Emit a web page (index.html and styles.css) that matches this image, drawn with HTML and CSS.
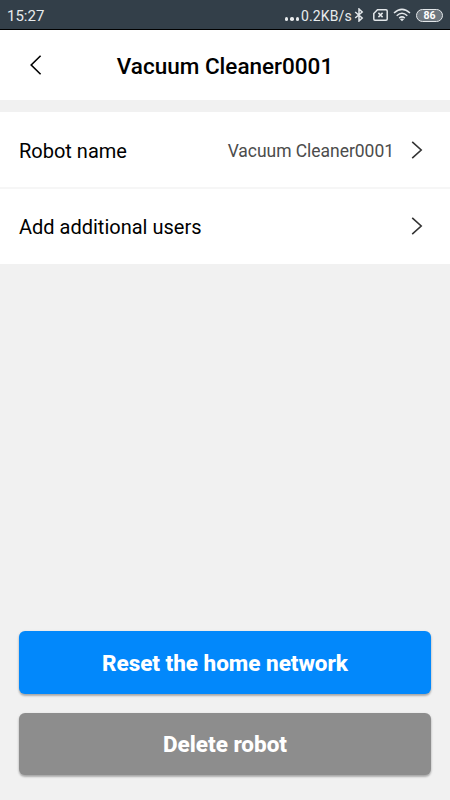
FILE: index.html
```html
<!DOCTYPE html>
<html lang="en">
<head>
<meta charset="utf-8">
<title>Vacuum Cleaner0001</title>
<link rel="stylesheet" href="styles.css">
</head>
<body>
<div class="screen">
  <div class="status">
    <span class="clock">15:27</span>
    <div class="status-right">
      <span class="dots"><i></i><i></i><i></i></span>
      <span class="speed">0.2KB/s</span>
      <svg class="bluetooth" width="10" height="14" viewBox="0 0 10 14"><path d="M1.200 4l7 6L5 13V1l3.200 3-7 6"/></svg>
      <svg class="sim" width="15" height="12" viewBox="0 0 15 12"><path d="M4.500 .8H13q1.200 0 1.200 1.200v8q0 1.200-1.200 1.200H2Q.8 11.200 .8 10V4.500z"/><path d="M5.400 3.900l4.200 4.200M9.600 3.900L5.400 8.100"/></svg>
      <svg class="wifi" width="18" height="14" viewBox="0 0 18 14"><path d="M1 5q8-7.200 16 0M3.700 7.700q5.300-4.800 10.600 0M6.200 10.100q2.800-2.400 5.600 0"/><path class="solid" d="M7 11.200q2-1.500 4 0L9 13.200z"/></svg>
      <span class="battery">86</span>
    </div>
  </div>
  <header class="header">
    <svg class="back" width="12" height="20" viewBox="0 0 12 20"><path d="M10.600 .7L1.200 10l9.400 9.300"/></svg>
    <h1 class="title">Vacuum Cleaner0001</h1>
  </header>
  <main class="list">
    <div class="row">
      <span class="label">Robot name</span>
      <span class="value">Vacuum Cleaner0001</span>
      <svg class="chevron" width="12" height="18" viewBox="0 0 12 18"><path d="M1.200 .8L10.200 9l-9 8.200"/></svg>
    </div>
    <div class="row">
      <span class="label">Add additional users</span>
      <svg class="chevron" width="12" height="18" viewBox="0 0 12 18"><path d="M1.200 .8L10.200 9l-9 8.200"/></svg>
    </div>
  </main>
  <div class="actions">
    <button class="button primary">Reset the home network</button>
    <button class="button secondary">Delete robot</button>
  </div>
</div>
</body>
</html>
```
FILE: styles.css
```css
* { box-sizing: border-box; }
body { margin: 0; font-family: Roboto, sans-serif; background: #f1f1f1; }
.screen { width: 450px; height: 800px; display: flex; flex-direction: column; overflow: hidden; }
svg { flex: none; fill: none; stroke: #000; stroke-width: 1.6; }
.status {
  height: 30px; flex: none; display: flex; align-items: center; justify-content: space-between;
  padding: 1px 7px 0; background: #333f49; border-bottom: 1px solid #000; color: #e8ebed;
}
.status svg { stroke: #e3e7ea; stroke-width: 1.5; }
.clock { font-size: 15px; line-height: 20px; padding-top: 2px; }
.status-right { display: flex; align-items: center; }
.dots { display: flex; gap: 2px; margin: 8px 2px 0 0; }
.dots i { width: 3.500px; height: 3.500px; border-radius: 50%; background: #e8ebed; }
.speed { font-size: 14px; line-height: 20px; padding-top: 2px; width: 51px; white-space: nowrap; letter-spacing: .12px; }
.bluetooth { margin-left: 2px; }
.sim { margin-left: 9px; }
.wifi { margin-left: 5px; }
.wifi .solid { fill: #e3e7ea; stroke: none; }
.battery {
  width: 27px; height: 13px; margin-left: 5px; border: 1.5px solid #e3e7ea; border-radius: 7px;
  background: #6d767e; color: #fff; font-size: 10.500px; font-weight: 700; line-height: 11px; text-align: center;
}
.header { height: 70px; flex: none; display: flex; align-items: center; background: #fff; padding: 0 29px; }
.back { margin: -1px 0 0 1px; }
.title { flex: 1; margin: 1px 43px 0 30px; font-size: 22.500px; line-height: 28px; font-weight: 500; text-align: center; white-space: nowrap; }
.list { margin-top: 12px; flex: none; background: #fff; height: 152px; }
.row { height: 76px; display: flex; align-items: center; padding: 0 27px 0 19px; }
.row + .row { border-top: 2px solid #f6f6f6; margin-top: -1px; height: 77px; }
.label { flex: 1; font-size: 20px; line-height: 26px; color: #000; padding-top: 1px; }
.value { font-size: 17.500px; line-height: 24px; color: #4c4c4c; margin-right: 17px; padding-top: 1px; letter-spacing: -.04px; }
.chevron { stroke: #333; }
.row + .row .chevron { margin-top: -1px; }
.actions { margin: auto 19px 25px; display: flex; flex-direction: column; gap: 19px; }
.button {
  height: 62.500px; border: 0; border-radius: 6px; padding: 2px 0 0; color: #fff;
  font-family: Roboto, sans-serif; font-size: 22.500px; font-weight: 800; letter-spacing: -.03px;
  box-shadow: 0 2px 2px rgba(0,0,0,.22), 0 1px 3px rgba(0,0,0,.15);
}
.primary { background: #0288fb; }
.secondary { background: #8d8d8d; padding-top: 1px; }
```
